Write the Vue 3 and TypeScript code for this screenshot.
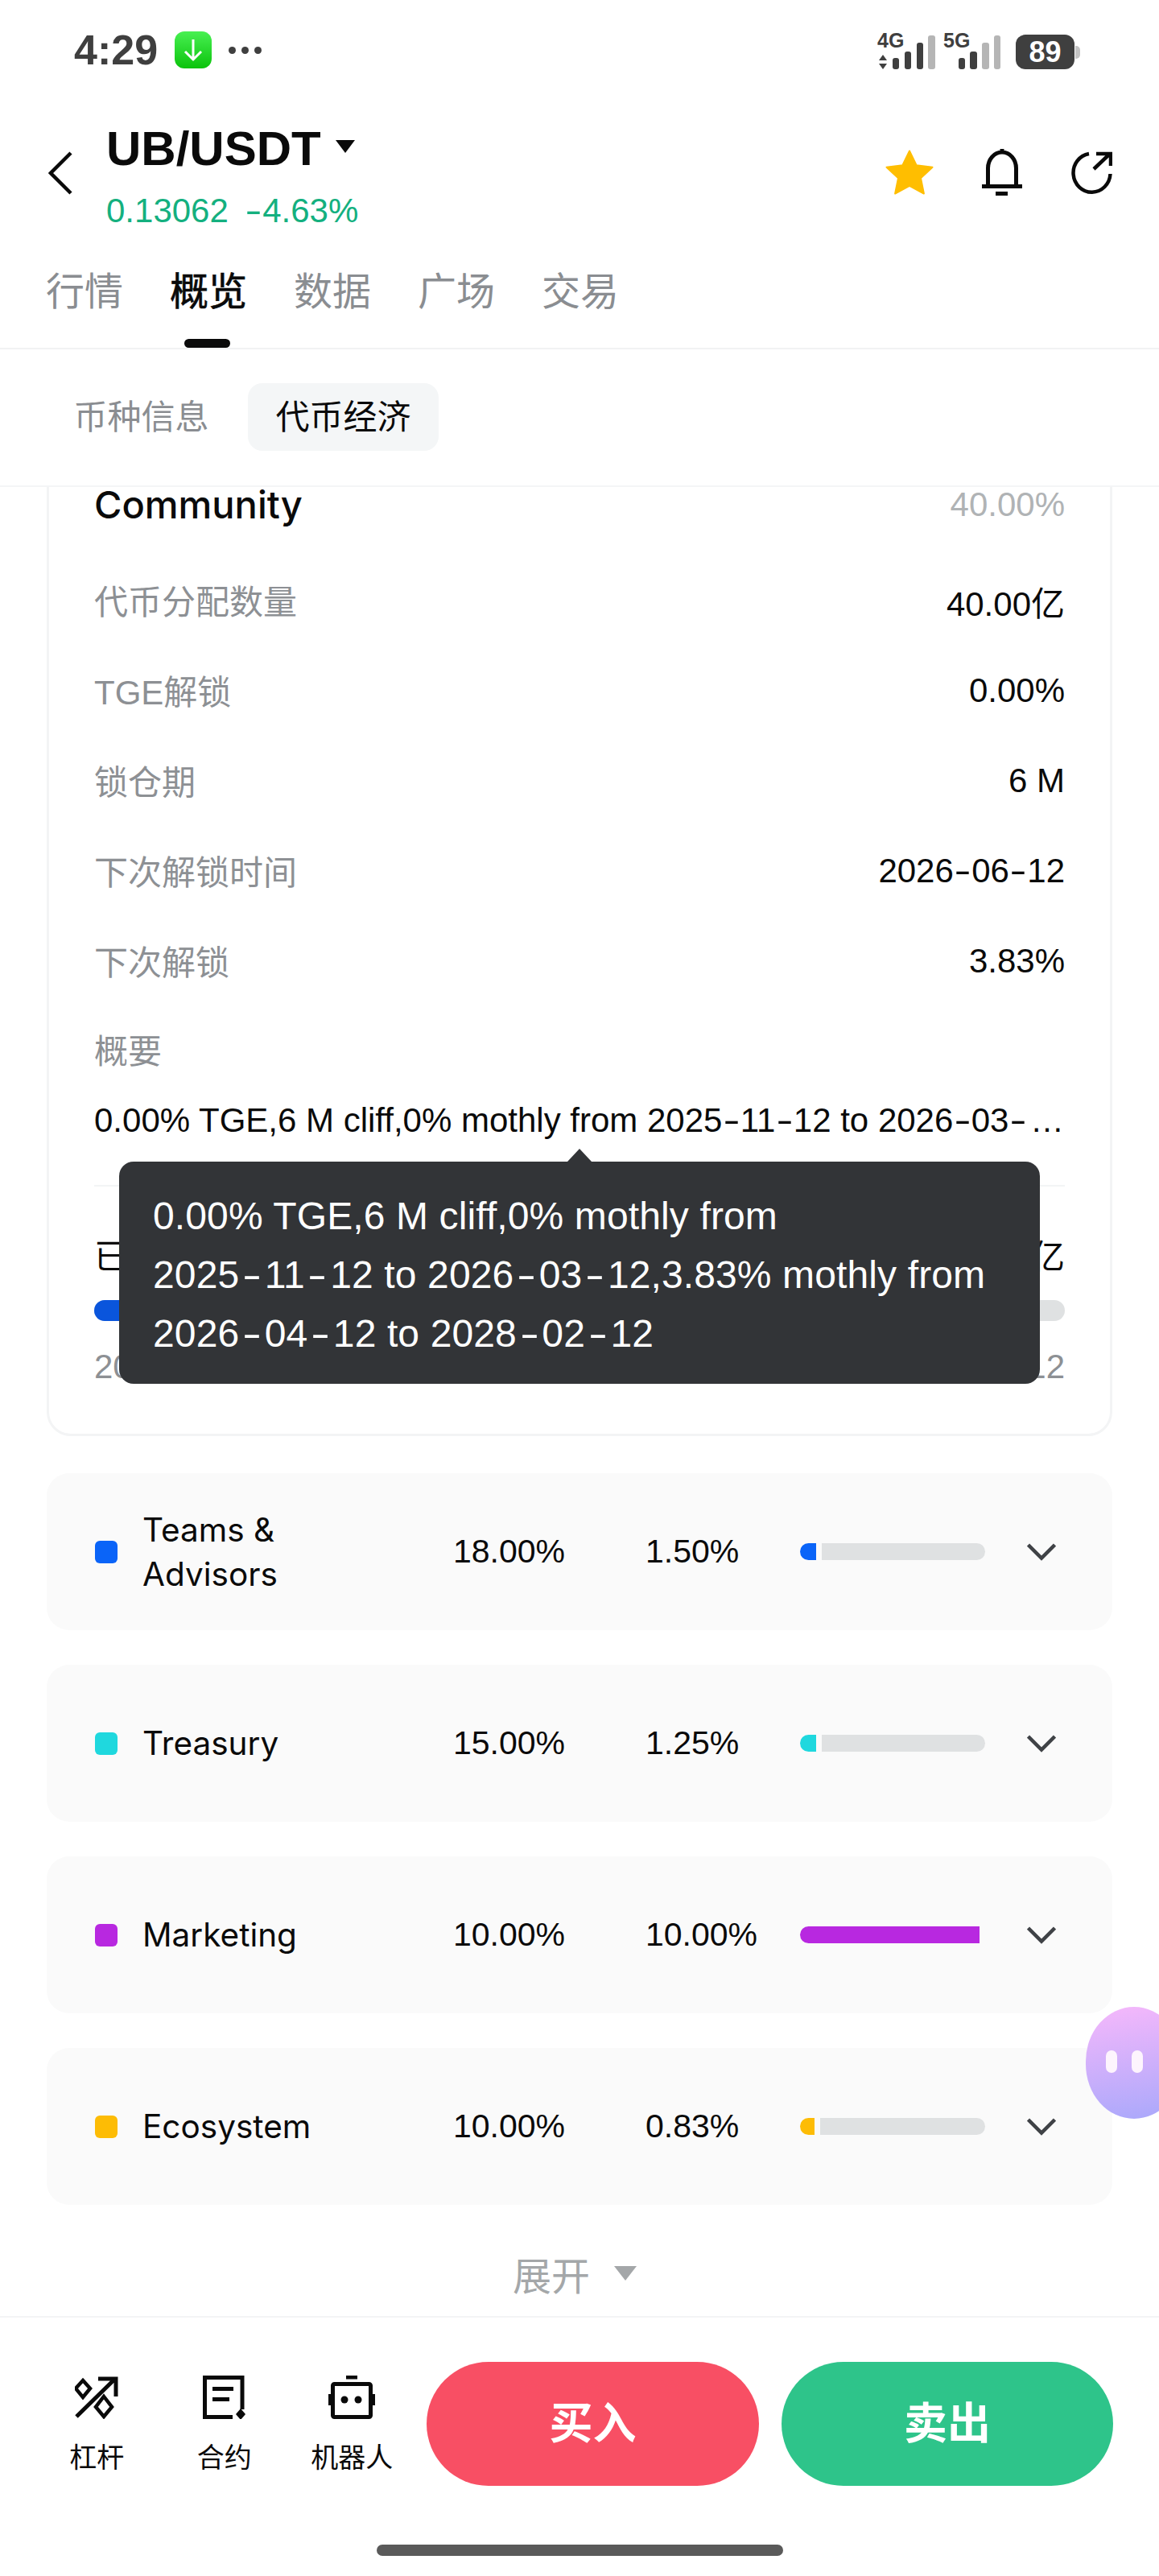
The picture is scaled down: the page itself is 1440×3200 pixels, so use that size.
<script setup lang="ts">
import { h } from 'vue'
import type { FunctionalComponent } from 'vue'

interface InfoRow {
  label: string
  value: string
}

interface Allocation {
  name: string
  color: string
  share: string
  unlocked: string
  fill: number
}

const tabs: string[] = ['行情', '概览', '数据', '广场', '交易']

const infoRows: InfoRow[] = [
  { label: '代币分配数量', value: '40.00亿' },
  { label: 'TGE解锁', value: '0.00%' },
  { label: '锁仓期', value: '6 M' },
  { label: '下次解锁时间', value: '2026-06-12' },
  { label: '下次解锁', value: '3.83%' },
]

const allocations: Allocation[] = [
  { name: 'Teams & Advisors', color: '#0a64f8', share: '18.00%', unlocked: '1.50%', fill: 20 },
  { name: 'Treasury', color: '#1fd8de', share: '15.00%', unlocked: '1.25%', fill: 20 },
  { name: 'Marketing', color: '#b828e0', share: '10.00%', unlocked: '10.00%', fill: 223 },
  { name: 'Ecosystem', color: '#fdbc05', share: '10.00%', unlocked: '0.83%', fill: 18 },
]

const summary = '0.00% TGE,6 M cliff,0% mothly from 2025-11-12 to 2026-03-12,3.83% mothly from 2026-04-12 to 2028-02-12'

const tipLines: string[] = [
  '0.00% TGE,6 M cliff,0% mothly from',
  '2025-11-12 to 2026-03-12,3.83% mothly from',
  '2026-04-12 to 2028-02-12',
]

// 原图字体的连字符比 Liberation 宽，这里单独包一层
const Dashed: FunctionalComponent<{ text: string }> = (props) =>
  props.text.split('-').flatMap((part, i) => (i ? [h('span', { class: 'dash' }, '-'), part] : [part]))
</script>

<template>
  <div class="page">
    <!-- 状态栏 -->
    <div class="status">
      <div class="status-left">
        <span class="time">4:29</span>
        <span class="app-badge">
          <svg width="26" height="30" viewBox="0 0 26 30" fill="none" stroke="#fff" stroke-width="3">
            <path d="M13 2V27M3 17L13 27L23 17" />
          </svg>
        </span>
        <span class="dots"><i></i><i></i><i></i></span>
      </div>
      <div class="status-right">
        <svg width="154" height="48" viewBox="0 0 154 48">
          <text x="0" y="20" class="net">4G</text>
          <path d="M7 29L12 36H2ZM7 47L2 40H12Z" fill="#3f3f3f" />
          <rect x="19" y="33" width="8" height="14" rx="3" fill="#3f3f3f" />
          <rect x="34" y="25" width="8" height="22" rx="3" fill="#3f3f3f" />
          <rect x="49" y="14" width="8" height="33" rx="3" fill="#3f3f3f" />
          <rect x="63" y="5" width="9" height="42" rx="3" fill="#b5b5b5" />
          <text x="82" y="20" class="net">5G</text>
          <rect x="101" y="33" width="8" height="14" rx="3" fill="#3f3f3f" />
          <rect x="115" y="25" width="9" height="22" rx="3" fill="#3f3f3f" />
          <rect x="130" y="14" width="9" height="33" rx="3" fill="#b5b5b5" />
          <rect x="145" y="5" width="8" height="42" rx="3" fill="#b5b5b5" />
        </svg>
        <div class="battery">89</div>
        <span class="battery-nub"></span>
      </div>
    </div>

    <!-- 标题 -->
    <div class="header">
      <svg class="back" width="30" height="54" viewBox="0 0 30 54" fill="none" stroke="#0a0a0a" stroke-width="4.5">
        <path d="M28 2L3 27L28 52" />
      </svg>
      <div class="pair">
        <div class="pair-name">UB/USDT<span class="caret"></span></div>
        <div class="pair-price"><span>0.13062</span><span><Dashed text="-4.63%" /></span></div>
      </div>
      <div class="header-icons">
        <svg width="60" height="56" viewBox="0 0 60 56">
          <path d="M30 1.5L38.6 19.2L58.5 21.8L44 35.2L47.9 54.5L30 44.9L12.1 54.5L16 35.2L1.5 21.8L21.4 19.2Z" fill="#ffbe00" stroke="#ffbe00" stroke-width="2" stroke-linejoin="round" />
        </svg>
        <svg width="50" height="58" viewBox="0 0 50 58" fill="none" stroke="#0a0a0a" stroke-width="5">
          <path d="M25 0V5M7.500 46V24A17.500 20 0 0 1 42.500 24V46M0 46.500H50" />
          <path d="M17 55.500H32" />
        </svg>
        <svg width="52" height="54" viewBox="0 0 52 54" fill="none" stroke="#0a0a0a" stroke-width="4.500">
          <path d="M23 4A23 24 0 1 0 49.500 29" />
          <path d="M29 23L49 4M32 4H50V19" />
        </svg>
      </div>
    </div>

    <!-- 主 tab -->
    <div class="tabs">
      <div v-for="tab in tabs" :key="tab" class="tab" :class="{ active: tab === '概览' }">{{ tab }}</div>
    </div>

    <!-- 子 tab -->
    <div class="subtabs">
      <div class="subtab">币种信息</div>
      <div class="subtab current">代币经济</div>
    </div>

    <div class="scroll">
      <div class="card">
        <div class="card-title">
          <span class="community">Community</span>
          <span class="percent">40.00%</span>
        </div>
        <div v-for="row in infoRows" :key="row.label" class="info-row">
          <span class="label">{{ row.label }}</span>
          <span class="value"><Dashed :text="row.value" /></span>
        </div>
        <div class="summary-label label">概要</div>
        <div class="summary"><Dashed :text="summary" /></div>
        <div class="divider"></div>
        <div class="vest-head">
          <span>已解锁</span>
          <span>1.53亿</span>
        </div>
        <div class="vest-track"><div class="vest-fill"></div></div>
        <div class="vest-dates">
          <span><Dashed text="2025-11-12" /></span>
          <span><Dashed text="2028-02-12" /></span>
        </div>

        <div class="tooltip">
          <div v-for="line in tipLines" :key="line"><Dashed :text="line" /></div>
        </div>
      </div>

      <div class="alloc-list">
        <div v-for="item in allocations" :key="item.name" class="alloc">
          <span class="alloc-dot" :style="{ background: item.color }"></span>
          <span class="alloc-name">{{ item.name }}</span>
          <span>{{ item.share }}</span>
          <span>{{ item.unlocked }}</span>
          <div class="alloc-bar">
            <span class="alloc-fill" :style="{ width: item.fill + 'px', background: item.color }"></span>
            <span v-if="item.fill < 100" class="alloc-rest"></span>
          </div>
          <svg width="36" height="22" viewBox="0 0 36 22" fill="none" stroke="#3f4246" stroke-width="4.500">
            <path d="M1.500 2L18 18.500L34.500 2" />
          </svg>
        </div>
      </div>

      <div class="expand">
        <span>展开</span>
        <svg width="28" height="18" viewBox="0 0 28 18"><path d="M0 0H28L14 18Z" fill="#a4a7a9" /></svg>
      </div>
    </div>

    <!-- 底部操作 -->
    <div class="bottom">
      <div class="tools">
        <div class="tool">
          <svg width="54" height="54" viewBox="0 0 54 54" fill="none" stroke="#0a0a0a" stroke-width="5">
            <path d="M2 51L50 4M29 4H51V26" />
            <path d="M10 6L19 16L10 27L1 16Z" stroke-width="4.500" />
            <path d="M36 26L46 39L36 51L26 39Z" stroke-width="4.500" />
          </svg>
          <span>杠杆</span>
        </div>
        <div class="tool">
          <svg width="54" height="54" viewBox="0 0 54 54" fill="none" stroke="#0a0a0a" stroke-width="5">
            <path d="M49 42V2.500H2.500V51.500H37" />
            <path d="M12 16.500H38M12 29.500H33" />
            <path d="M47 41L53 48L47 55L41 48Z" fill="#0a0a0a" stroke="none" />
          </svg>
          <span>合约</span>
        </div>
        <div class="tool">
          <svg width="58" height="54" viewBox="0 0 58 54" fill="none" stroke="#0a0a0a" stroke-width="5">
            <path d="M22 2H36" />
            <rect x="5.500" y="10.500" width="47" height="41" rx="2" />
            <path d="M1.500 23V37M56.500 23V37" stroke-width="3.500" />
            <circle cx="20" cy="30" r="4.500" fill="#0a0a0a" stroke="none" />
            <circle cx="37" cy="30" r="4.500" fill="#0a0a0a" stroke="none" />
          </svg>
          <span>机器人</span>
        </div>
      </div>
      <div class="trade buy">买入</div>
      <div class="trade sell">卖出</div>
    </div>
    <div class="home-indicator"></div>

    <div class="assistant"><i></i><i></i></div>
  </div>
</template>

<style>
html,
body {
  margin: 0;
  background: #fff;
}

.dash {
  display: inline-block;
  margin: 0 0.1em;
  transform: scaleX(1.5);
}
</style>

<style scoped>
.page {
  position: relative;
  width: 1440px;
  height: 3200px;
  overflow: hidden;
  background: #fff;
  color: #0a0a0a;
  font-family: "Liberation Sans", "Noto Sans CJK SC", sans-serif;
  display: flex;
  flex-direction: column;
}

.status {
  height: 124px;
  flex: none;
  padding: 0 98px 0 92px;
  display: flex;
  justify-content: space-between;
  align-items: center;
  box-sizing: border-box;
}

.status-left {
  display: flex;
  align-items: center;
}

.time {
  font-size: 52px;
  font-weight: 700;
  color: #3f3f3f;
  line-height: 60px;
}

.app-badge {
  width: 46px;
  height: 46px;
  margin-left: 21px;
  border-radius: 12px;
  background: linear-gradient(180deg, #48f052, #0bc30c);
  display: flex;
  align-items: center;
  justify-content: center;
}

.dots {
  display: flex;
  gap: 7px;
  margin-left: 21px;
}

.dots i {
  width: 9px;
  height: 9px;
  border-radius: 50%;
  background: #3f3f3f;
}

.status-right {
  display: flex;
  align-items: flex-end;
  margin-top: 2px;
}

.net {
  font-size: 25px;
  font-weight: 700;
  fill: #3f3f3f;
  font-family: "Liberation Sans", sans-serif;
}

.battery {
  width: 73px;
  height: 43px;
  margin-left: 18px;
  margin-bottom: 1px;
  border-radius: 12px;
  background: #3f3f3f;
  color: #fff;
  font-size: 36px;
  font-weight: 700;
  line-height: 43px;
  text-align: center;
}

.battery-nub {
  width: 6px;
  height: 16px;
  margin-bottom: 14px;
  margin-left: 1px;
  border-radius: 0 5px 5px 0;
  background: #c4c4c4;
}

.header {
  height: 166px;
  flex: none;
  padding: 0 58px 0 60px;
  display: flex;
  align-items: flex-start;
  box-sizing: border-box;
}

.back {
  margin-top: 64px;
}

.pair {
  margin-left: 42px;
  margin-top: 26px;
}

.pair-name {
  font-size: 60px;
  font-weight: 700;
  line-height: 70px;
  display: flex;
  align-items: center;
}

.caret {
  width: 0;
  height: 0;
  margin-left: 18px;
  margin-top: -6px;
  border-left: 12px solid transparent;
  border-right: 12px solid transparent;
  border-top: 16px solid #0a0a0a;
}

.pair-price {
  margin-top: 18px;
  font-size: 42px;
  line-height: 48px;
  color: #14b07f;
  display: flex;
  gap: 20px;
}

.header-icons {
  margin-left: auto;
  margin-top: 61px;
  display: flex;
  align-items: center;
  gap: 60px;
}

.tabs {
  height: 142px;
  flex: none;
  padding-left: 57px;
  display: flex;
  gap: 58px;
  border-bottom: 2px solid #f1f2f3;
}

.tab {
  position: relative;
  font-size: 48px;
  line-height: 70px;
  padding-top: 38px;
  color: #8a8d91;
}

.tab.active {
  color: #0a0a0a;
  -webkit-text-stroke: 0.7px #0a0a0a;
}

.tab.active::after {
  content: "";
  position: absolute;
  left: 18px;
  bottom: 0;
  width: 57px;
  height: 11px;
  border-radius: 6px;
  background: #0a0a0a;
}

.subtabs {
  height: 171px;
  flex: none;
  box-sizing: border-box;
  padding: 42px 0 0 57px;
  display: flex;
  gap: 14px;
  border-bottom: 2px solid #f4f5f6;
}

.subtab {
  height: 84px;
  padding: 0 34.5px;
  font-size: 42px;
  line-height: 86px;
  color: #8a8d91;
  border-radius: 18px;
}

.subtab.current {
  background: #f4f6f7;
  color: #0a0a0a;
}

.scroll {
  flex: 1;
  overflow: hidden;
  padding: 0 58px;
}

.card {
  position: relative;
  margin-top: -28px;
  height: 1207px;
  box-sizing: border-box;
  padding: 0 56px;
  border: 3px solid #f3f4f5;
  border-radius: 30px;
}

.card-title {
  margin-top: 18px;
  margin-bottom: 62px;
  height: 56px;
  display: flex;
  justify-content: space-between;
  align-items: center;
}

.community {
  font-family: Inter, "Liberation Sans", sans-serif;
  font-size: 47px;
  font-weight: 450;
}

.percent {
  padding-top: 2px;
  font-size: 42px;
  font-weight: 400;
  color: #b0b3b5;
}

.info-row {
  margin-top: 56px;
  height: 56px;
  display: flex;
  justify-content: space-between;
  align-items: center;
  font-size: 42px;
}

.value {
  padding-top: 4px;
}

.label {
  color: #8d9094;
}

.summary-label {
  margin-top: 59px;
  font-size: 42px;
  line-height: 56px;
}

.summary {
  margin-top: 29px;
  font-size: 42px;
  line-height: 56px;
  white-space: nowrap;
  overflow: hidden;
  text-overflow: ellipsis;
}

.divider {
  margin-top: 52px;
  height: 2px;
  background: #f3f4f5;
}

.vest-head {
  margin-top: 60px;
  display: flex;
  justify-content: space-between;
  font-size: 42px;
  line-height: 56px;
}

.vest-track {
  margin-top: 25px;
  height: 26px;
  border-radius: 13px;
  background: #dfe1e2;
  overflow: hidden;
}

.vest-fill {
  width: 120px;
  height: 100%;
  background: #0a55dc;
}

.vest-dates {
  margin-top: 29px;
  display: flex;
  justify-content: space-between;
  font-size: 42px;
  line-height: 56px;
  color: #8d9094;
}

.tooltip {
  position: absolute;
  left: 87px;
  right: 87px;
  bottom: 62px;
  height: 276px;
  box-sizing: border-box;
  padding: 31px 42px;
  border-radius: 18px;
  background: #323437;
  color: #fff;
  font-size: 48px;
  line-height: 73px;
  letter-spacing: 0.12px;
  white-space: nowrap;
}

.tooltip :deep(.dash) {
  margin: 0 0.16em;
}

.tooltip::before {
  content: "";
  position: absolute;
  left: 557px;
  top: -16px;
  border-left: 15px solid transparent;
  border-right: 15px solid transparent;
  border-bottom: 16px solid #323437;
}

.alloc-list {
  margin-top: 46px;
  display: flex;
  flex-direction: column;
  gap: 43px;
}

.alloc {
  height: 195px;
  padding-left: 60px;
  border-radius: 28px;
  background: #fafafa;
  display: grid;
  grid-template-columns: 59px 386px 239px 192px 282px 36px;
  align-items: center;
  font-size: 41px;
}

.alloc-dot {
  width: 28px;
  height: 28px;
  border-radius: 6px;
}

.alloc-name {
  width: 200px;
  font-family: Inter, "Liberation Sans", sans-serif;
  font-size: 40.500px;
  line-height: 55px;
}

.alloc-bar {
  width: 230px;
  height: 21px;
  display: flex;
}

.alloc-fill {
  height: 100%;
  border-radius: 11px 0 0 11px;
}

.alloc-rest {
  flex: 1;
  margin-left: 7px;
  border-radius: 0 11px 11px 0;
  background: #dfe1e2;
}

.expand {
  height: 137px;
  box-sizing: border-box;
  padding: 32px 12px 0 0;
  display: flex;
  align-items: center;
  justify-content: center;
  gap: 30px;
  font-size: 48px;
  color: #a4a7a9;
}

.bottom {
  height: 323px;
  flex: none;
  box-sizing: border-box;
  border-top: 2px solid #f3f4f5;
  padding: 55px 57px 0 0;
  display: flex;
  align-items: flex-start;
}

.tools {
  width: 530px;
  flex: none;
  display: grid;
  grid-template-columns: repeat(3, 158.5px);
  padding: 17px 0 0 41px;
  box-sizing: border-box;
}

.tool {
  display: flex;
  flex-direction: column;
  align-items: center;
  gap: 26px;
  font-size: 34px;
  line-height: 44px;
}

.trade {
  height: 154px;
  border-radius: 77px;
  color: #fff;
  font-size: 54px;
  font-weight: 700;
  line-height: 154px;
  text-align: center;
}

.buy {
  width: 413px;
  background: #f84f64;
}

.sell {
  width: 412px;
  margin-left: 28px;
  background: #2ec48a;
}

.home-indicator {
  position: absolute;
  left: 468px;
  top: 3161px;
  width: 505px;
  height: 14px;
  border-radius: 7px;
  background: #5a5a5a;
}

.assistant {
  position: absolute;
  left: 1349px;
  top: 2493px;
  width: 120px;
  height: 139px;
  box-sizing: border-box;
  padding-left: 25px;
  padding-top: 54px;
  border-radius: 62px / 70px;
  background: linear-gradient(172deg, #f6b8fb, #a9a8fb);
  display: flex;
  gap: 18px;
}

.assistant i {
  width: 14px;
  height: 28px;
  border-radius: 7px;
  background: #fdf4fd;
}
</style>
